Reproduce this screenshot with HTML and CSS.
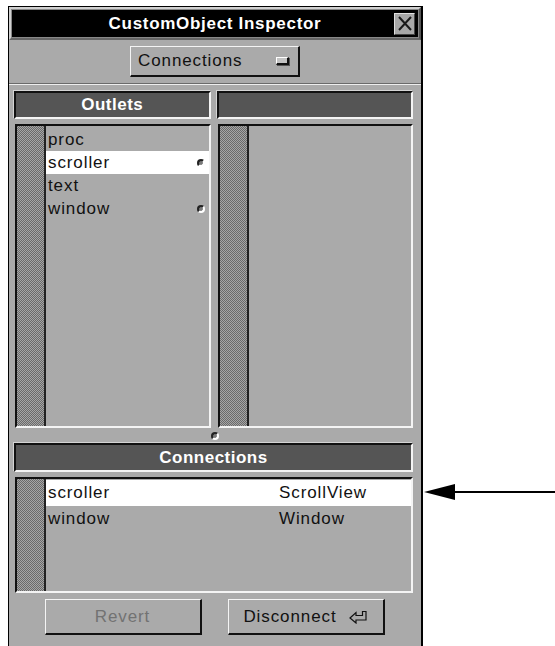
FILE: index.html
```html
<!DOCTYPE html>
<html>
<head>
    <title>CustomObject Inspector</title>
    <link rel="stylesheet" href="styles.css">
</head>
<body>
<div class="stage">
    <div class="window">
        <div class="titlebar">
            <span></span>
            <span class="title">CustomObject Inspector</span>
            <span class="close">
                <svg width="18" height="19" viewBox="0 0 18 19">
                    <path d="M3 3 L15 16 M15 3 L3 16" stroke="#1a1a1a" stroke-width="2" fill="none"/>
                </svg>
            </span>
        </div>

        <div class="popup-row">
            <div class="popup">
                <span>Connections</span>
                <span class="knob"></span>
            </div>
        </div>

        <div class="panel">
            <div class="outlets">
                <div class="column">
                    <div class="header">Outlets</div>
                    <div class="list">
                        <div class="gutter"></div>
                        <ul class="rows">
                            <li>proc</li>
                            <li class="selected">scroller<span class="dot"></span></li>
                            <li>text</li>
                            <li>window<span class="dot"></span></li>
                        </ul>
                    </div>
                </div>
                <div class="column">
                    <div class="header"></div>
                    <div class="list">
                        <div class="gutter"></div>
                        <ul class="rows"></ul>
                    </div>
                </div>
            </div>

            <div class="hinge"><span class="dot"></span></div>

            <div class="header">Connections</div>
            <div class="list conn-list">
                <div class="gutter"></div>
                <ul class="rows">
                    <li class="selected"><span>scroller</span><span>ScrollView</span></li>
                    <li><span>window</span><span>Window</span></li>
                </ul>
            </div>

            <div class="buttons">
                <div class="button disabled">Revert</div>
                <div class="button">
                    <span>Disconnect</span>
                    <svg width="19" height="14" viewBox="0 0 19 14">
                        <path d="M1 8 L7 2.5 L7 5.5 L13.5 5.5 L13.5 1.5 L17 1.5 L17 10 L7 10 L7 13 Z" fill="none" stroke="#111" stroke-width="1.2"/>
                    </svg>
                </div>
            </div>
        </div>
    </div>

    <div class="callout">
        <svg width="131" height="18" viewBox="0 0 131 18">
            <polygon points="0,9 31,1 31,17" fill="#000"/>
            <rect x="28" y="8" width="103" height="2" fill="#000"/>
        </svg>
    </div>
</div>
</body>
</html>
```

FILE: styles.css
```css
*
{
    margin: 0;
    padding: 0;
    box-sizing: border-box;
}
html, body
{
    background: #fff;
    overflow: hidden;
    font-family: "Liberation Sans", Arial, sans-serif;
}

.stage
{
    display: flex;
    align-items: flex-start;
}

.window
{
    width: 416px;
    min-height: 660px;
    margin: 6px 0 0 8px;
    border: 1px solid #000;
    border-right-width: 2px;
    border-bottom: none;
    background: #aaa;
}

/* title bar */
.titlebar
{
    display: grid;
    grid-template-columns: 1fr auto 1fr;
    align-items: center;
    height: 33px;
    background: #000;
    border: 2px solid;
    border-color: #d0d0d0 #555 #666 #d0d0d0;
    box-shadow: 0 0 0 1px #888 inset;
}
.title
{
    color: #fff;
    font-weight: bold;
    font-size: 17px;
    letter-spacing: 0.7px;
}
.close
{
    justify-self: end;
    margin-right: 4px;
    width: 21px;
    height: 22px;
    display: flex;
    align-items: center;
    justify-content: center;
    background: #a8a8a8;
    border: 1px solid;
    border-color: #e0e0e0 #444 #444 #e0e0e0;
}

/* popup */
.popup-row
{
    display: flex;
    justify-content: center;
    padding: 6px 0 6px 0;
    border-bottom: 1px solid #eee;
    height: 45px;
    position: relative;
}
.popup-row::after
{
    content: "";
    position: absolute;
    left: 0;
    right: 0;
    bottom: 0;
    border-bottom: 1px solid #6a6a6a;
}
.popup
{
    width: 170px;
    height: 31px;
    display: flex;
    align-items: center;
    justify-content: space-between;
    padding: 0 9px 0 7px;
    border: 1px solid;
    border-width: 1px 2px 2px 1px;
    border-color: #f4f4f4 #111 #111 #f4f4f4;
    font-size: 17px;
    letter-spacing: 0.9px;
    color: #111;
}
.knob
{
    width: 13px;
    height: 8px;
    background: #c4c4c4;
    border: 1px solid;
    border-width: 1px 2px 2px 1px;
    border-color: #fff #111 #111 #fff;
    box-shadow: 1px 1px 0 #555;
}

/* panels */
.panel
{
    padding: 0 8px 0 5px;
}
.outlets
{
    display: grid;
    grid-template-columns: 1fr 1fr;
    gap: 6px;
    margin-top: 6px;
}
.header
{
    height: 28px;
    background: #555;
    color: #fff;
    font-weight: bold;
    font-size: 17px;
    letter-spacing: 0.5px;
    text-align: center;
    line-height: 24px;
    border: 2px solid;
    border-color: #111 #f4f4f4 #f4f4f4 #111;
    box-shadow: -1px -1px 0 #d4d4d4;
}
.list
{
    display: flex;
    height: 304px;
    margin: 5px 0 0 1px;
    border: 2px solid;
    border-color: #111 #f4f4f4 #f4f4f4 #111;
    background: #aaa;
}
.gutter
{
    width: 29px;
    flex: none;
    background-color: #a6a6a6;
    background-image: radial-gradient(circle at 0.5px 0.5px, #6a6a6a 0.6px, transparent 0.7px),
                      radial-gradient(circle at 1.5px 1.5px, #6a6a6a 0.6px, transparent 0.7px);
    background-size: 2px 2px;
    border-right: 2px solid #222;
}
.rows
{
    list-style: none;
    flex: 1;
    padding-top: 2px;
    font-size: 17px;
    letter-spacing: 0.9px;
    color: #111;
}
.rows li
{
    height: 23px;
    line-height: 23px;
    padding: 0 4px 0 2px;
    display: flex;
    align-items: center;
    justify-content: space-between;
}
.rows li.selected
{
    background: #fff;
}
.dot
{
    width: 8px;
    height: 8px;
    border-radius: 50%;
    background: #7a7a7a;
    border: 2px solid;
    border-color: #222 #fff #fff #222;
}

.hinge
{
    height: 15px;
    display: flex;
    align-items: center;
    justify-content: center;
    padding-left: 2px;
}
.hinge + .header
{
    height: 29px;
    line-height: 25px;
}

.conn-list
{
    height: 116px;
}
.conn-list .rows
{
    padding-top: 1px;
}
.conn-list .rows li
{
    height: 26px;
    line-height: 26px;
    display: grid;
    grid-template-columns: 231px 1fr;
}

/* buttons */
.buttons
{
    display: flex;
    justify-content: center;
    gap: 26px;
    margin-top: 6px;
    padding-left: 2px;
}
.button
{
    width: 157px;
    height: 36px;
    display: flex;
    align-items: center;
    justify-content: center;
    gap: 12px;
    border: 1px solid;
    border-width: 1px 2px 2px 1px;
    border-color: #f4f4f4 #111 #111 #f4f4f4;
    font-size: 17px;
    letter-spacing: 0.9px;
    color: #111;
    padding-top: 1px;
}
.button.disabled
{
    color: #727272;
}

.callout
{
    margin: 483px 0 0 1px;
    line-height: 0;
}
```
